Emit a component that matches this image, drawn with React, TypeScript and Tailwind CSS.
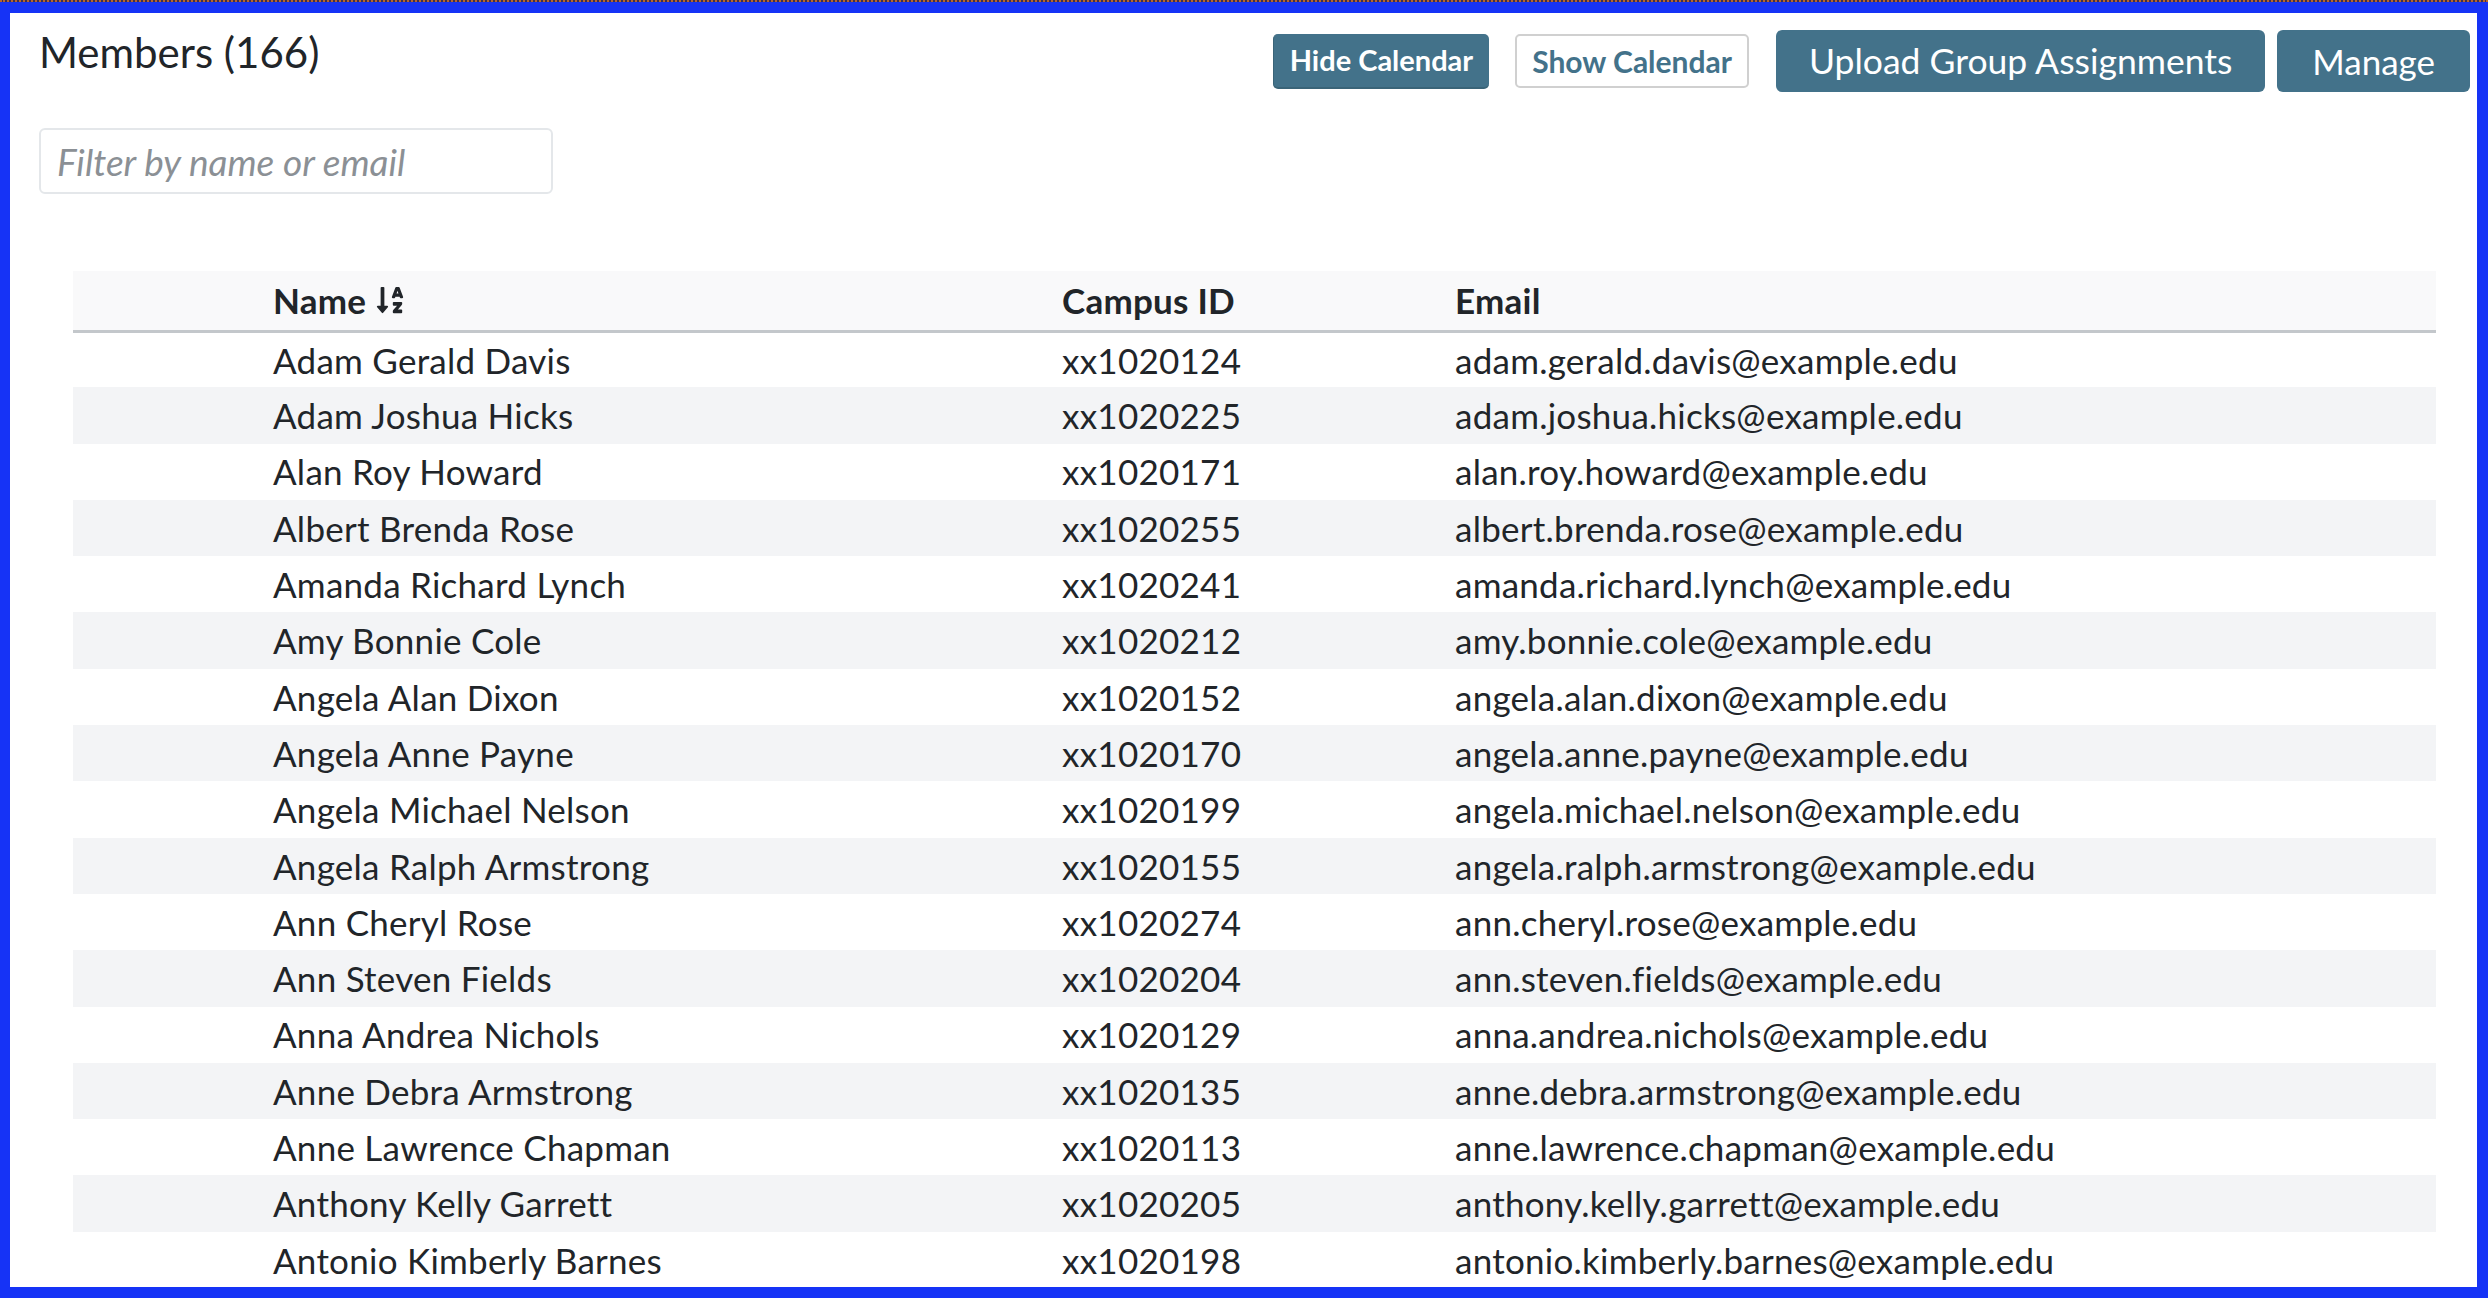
import React from "react";
import { FaSortAlphaDown } from "react-icons/fa";

interface Member {
  name: string;
  campusId: string;
}

const members: Member[] = [
  { name: "Adam Gerald Davis", campusId: "xx1020124" },
  { name: "Adam Joshua Hicks", campusId: "xx1020225" },
  { name: "Alan Roy Howard", campusId: "xx1020171" },
  { name: "Albert Brenda Rose", campusId: "xx1020255" },
  { name: "Amanda Richard Lynch", campusId: "xx1020241" },
  { name: "Amy Bonnie Cole", campusId: "xx1020212" },
  { name: "Angela Alan Dixon", campusId: "xx1020152" },
  { name: "Angela Anne Payne", campusId: "xx1020170" },
  { name: "Angela Michael Nelson", campusId: "xx1020199" },
  { name: "Angela Ralph Armstrong", campusId: "xx1020155" },
  { name: "Ann Cheryl Rose", campusId: "xx1020274" },
  { name: "Ann Steven Fields", campusId: "xx1020204" },
  { name: "Anna Andrea Nichols", campusId: "xx1020129" },
  { name: "Anne Debra Armstrong", campusId: "xx1020135" },
  { name: "Anne Lawrence Chapman", campusId: "xx1020113" },
  { name: "Anthony Kelly Garrett", campusId: "xx1020205" },
  { name: "Antonio Kimberly Barnes", campusId: "xx1020198" },
];

const emailFor = (name: string) =>
  name.toLowerCase().split(" ").join(".") + "@example.edu";

export default function App() {
  return (
    <div className="flex h-screen w-screen flex-col overflow-hidden bg-[#1633f6] font-['Lato',sans-serif] text-[#212529]">
      <div className="h-[2px] border-t-2 border-dotted border-[#b8652c] bg-[#3a3050]" />
      <div className="mt-[11px] mb-[11px] ml-[10px] mr-[11px] flex-1 overflow-hidden bg-white pl-[29px] pr-[7px] pt-[17px]">
        <div className="flex items-start justify-between">
          <h2 className="mt-[-3px] text-[42px] leading-[50px] font-normal">
            Members (166)
          </h2>
          <div className="flex items-center">
            <button className="h-[55px] rounded-[5px] border-b-2 border-l border-[#3a6478] bg-[#43728a] px-[16px] text-[29px] font-bold text-white">
              Hide Calendar
            </button>
            <button className="ml-[26px] h-[54px] rounded-[5px] border-2 border-[#d0d0d0] bg-white px-[15px] text-[30px] font-bold text-[#43728a]">
              Show Calendar
            </button>
            <button className="ml-[27px] h-[62px] rounded-[6px] bg-[#43728a] px-[33px] text-[35.5px] text-white">
              Upload Group Assignments
            </button>
            <button className="ml-[12px] h-[62px] rounded-[6px] bg-[#43728a] px-[35px] text-[35px] text-white">
              Manage
            </button>
          </div>
        </div>

        <input
          type="text"
          placeholder="Filter by name or email"
          className="mt-[36px] block h-[66px] w-[514px] rounded-[6px] border-2 border-[#e4e7ea] px-[16px] text-[37px] placeholder:italic placeholder:text-[#8b9095] focus:outline-none"
        />

        <div className="mx-[34px] mt-[77px]">
          <table className="w-full table-fixed border-collapse text-left text-[35px] tracking-[0.25px]">
            <colgroup>
              <col className="w-[188px]" />
              <col className="w-[789px]" />
              <col className="w-[393px]" />
              <col />
            </colgroup>
            <thead>
              <tr className="h-[60px] border-b-[3px] border-[#c3c7cb] bg-[#f9f9fa]">
                <th />
                <th className="pl-[12px] font-bold">
                  <span className="inline-flex items-center">
                    Name
                    <FaSortAlphaDown className="ml-[9px] h-[30px] w-[30px]" />
                  </span>
                </th>
                <th className="pl-[12px] font-bold">Campus ID</th>
                <th className="pl-[12px] font-bold">Email</th>
              </tr>
            </thead>
            <tbody>
              {members.map((m, i) => (
                <tr
                  key={m.campusId}
                  className={`h-[56.3px] ${i % 2 === 1 ? "bg-[#f3f4f6]" : "bg-white"}`}
                >
                  <td />
                  <td className="pl-[12px]">{m.name}</td>
                  <td className="pl-[12px]">{m.campusId}</td>
                  <td className="pl-[12px]">{emailFor(m.name)}</td>
                </tr>
              ))}
            </tbody>
          </table>
        </div>
      </div>
    </div>
  );
}
